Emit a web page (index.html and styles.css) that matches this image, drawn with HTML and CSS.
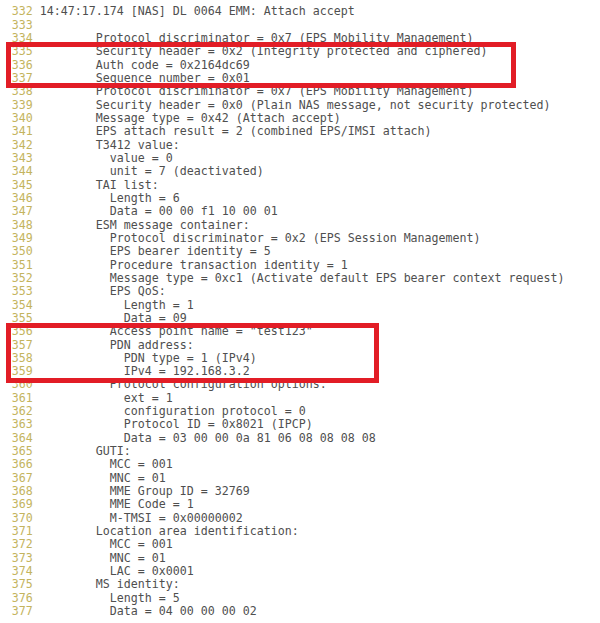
FILE: index.html
```html
<!DOCTYPE html>
<html>
<head>
<meta charset="utf-8">
<link rel="stylesheet" href="styles.css">
</head>
<body>
<div class="log">
<div class="row"><span class="num">332</span> 14:47:17.174 [NAS] DL 0064 EMM: Attach accept</div>
<div class="row"><span class="num">333</span></div>
<div class="row"><span class="num">334</span>         Protocol discriminator = 0x7 (EPS Mobility Management)</div>
<div class="row"><span class="num">335</span>         Security header = 0x2 (Integrity protected and ciphered)</div>
<div class="row"><span class="num">336</span>         Auth code = 0x2164dc69</div>
<div class="row"><span class="num">337</span>         Sequence number = 0x01</div>
<div class="row"><span class="num">338</span>         Protocol discriminator = 0x7 (EPS Mobility Management)</div>
<div class="row"><span class="num">339</span>         Security header = 0x0 (Plain NAS message, not security protected)</div>
<div class="row"><span class="num">340</span>         Message type = 0x42 (Attach accept)</div>
<div class="row"><span class="num">341</span>         EPS attach result = 2 (combined EPS/IMSI attach)</div>
<div class="row"><span class="num">342</span>         T3412 value:</div>
<div class="row"><span class="num">343</span>           value = 0</div>
<div class="row"><span class="num">344</span>           unit = 7 (deactivated)</div>
<div class="row"><span class="num">345</span>         TAI list:</div>
<div class="row"><span class="num">346</span>           Length = 6</div>
<div class="row"><span class="num">347</span>           Data = 00 00 f1 10 00 01</div>
<div class="row"><span class="num">348</span>         ESM message container:</div>
<div class="row"><span class="num">349</span>           Protocol discriminator = 0x2 (EPS Session Management)</div>
<div class="row"><span class="num">350</span>           EPS bearer identity = 5</div>
<div class="row"><span class="num">351</span>           Procedure transaction identity = 1</div>
<div class="row"><span class="num">352</span>           Message type = 0xc1 (Activate default EPS bearer context request)</div>
<div class="row"><span class="num">353</span>           EPS QoS:</div>
<div class="row"><span class="num">354</span>             Length = 1</div>
<div class="row"><span class="num">355</span>             Data = 09</div>
<div class="row"><span class="num">356</span>           Access point name = "test123"</div>
<div class="row"><span class="num">357</span>           PDN address:</div>
<div class="row"><span class="num">358</span>             PDN type = 1 (IPv4)</div>
<div class="row"><span class="num">359</span>             IPv4 = 192.168.3.2</div>
<div class="row"><span class="num">360</span>           Protocol configuration options:</div>
<div class="row"><span class="num">361</span>             ext = 1</div>
<div class="row"><span class="num">362</span>             configuration protocol = 0</div>
<div class="row"><span class="num">363</span>             Protocol ID = 0x8021 (IPCP)</div>
<div class="row"><span class="num">364</span>             Data = 03 00 00 0a 81 06 08 08 08 08</div>
<div class="row"><span class="num">365</span>         GUTI:</div>
<div class="row"><span class="num">366</span>           MCC = 001</div>
<div class="row"><span class="num">367</span>           MNC = 01</div>
<div class="row"><span class="num">368</span>           MME Group ID = 32769</div>
<div class="row"><span class="num">369</span>           MME Code = 1</div>
<div class="row"><span class="num">370</span>           M-TMSI = 0x00000002</div>
<div class="row"><span class="num">371</span>         Location area identification:</div>
<div class="row"><span class="num">372</span>           MCC = 001</div>
<div class="row"><span class="num">373</span>           MNC = 01</div>
<div class="row"><span class="num">374</span>           LAC = 0x0001</div>
<div class="row"><span class="num">375</span>         MS identity:</div>
<div class="row"><span class="num">376</span>           Length = 5</div>
<div class="row"><span class="num">377</span>           Data = 04 00 00 00 02</div>
<div class="mark mark-auth"></div>
<div class="mark mark-pdn"></div>
</div>
</body>
</html>
```
FILE: styles.css
```css
html, body {
  margin: 0;
  padding: 0;
  background: #ffffff;
}
.log {
  position: relative;
  width: 600px;
  height: 623px;
  box-sizing: border-box;
  padding: 5.3px 0 0 11.7px;
  font-family: "DejaVu Sans Mono", "Liberation Mono", monospace;
  font-size: 11.63px;
  line-height: 13.33px;
  color: #4f4f4f;
  overflow: hidden;
}
.row {
  white-space: pre;
  height: 13.33px;
}
.num {
  color: #c4b45e;
}
.mark {
  position: absolute;
  left: 6px;
  border: 5px solid #e21d26;
  box-sizing: border-box;
}
.mark-auth {
  top: 42px;
  width: 510px;
  height: 46px;
}
.mark-pdn {
  top: 323px;
  width: 373px;
  height: 60px;
}
```
